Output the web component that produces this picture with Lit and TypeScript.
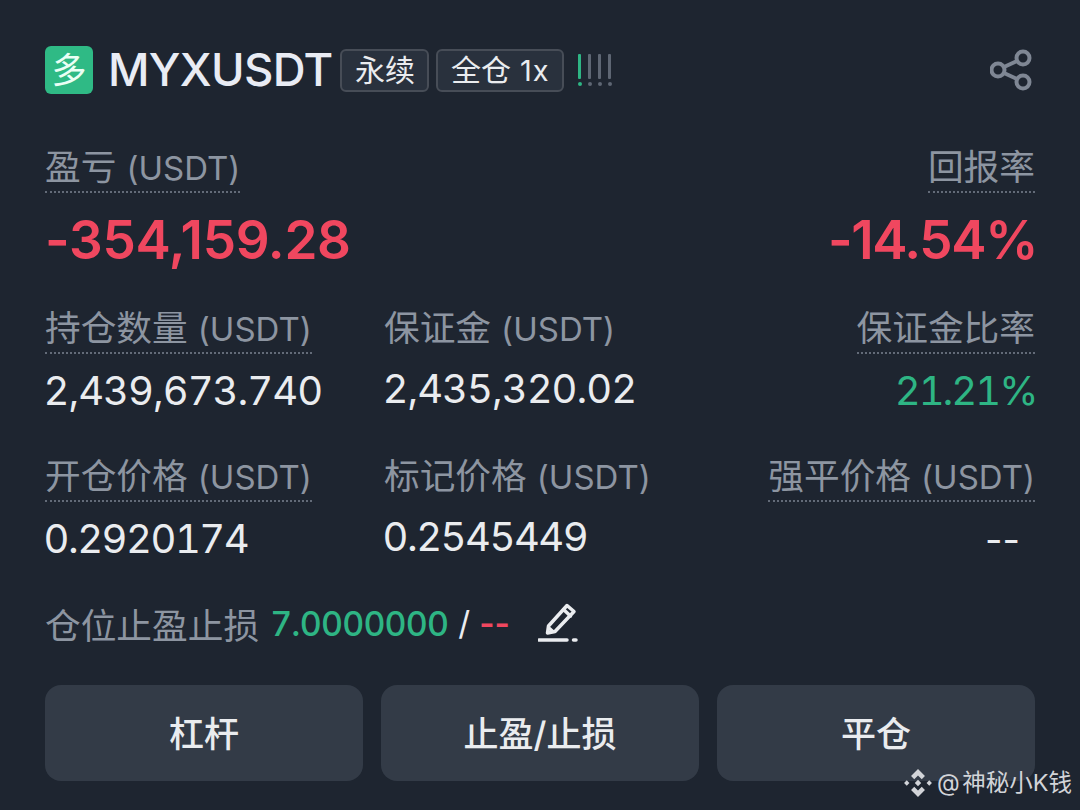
import { LitElement, html, css } from "lit";
import { customElement } from "lit/decorators.js";

@customElement("app-root")
export class AppRoot extends LitElement {
  static styles = css`
    :host {
      display: block;
      width: 1080px;
      height: 810px;
      background: #1e2530;
      position: relative;
      overflow: hidden;
      font-family: Inter, "Noto Sans CJK SC", sans-serif;
      color: #eaecef;
    }
    .page { padding: 46px 45px 0 45px; display: flex; flex-direction: column; }
    .head { display: flex; align-items: center; height: 48px; }
    .badge {
      width: 48px; height: 48px; border-radius: 6px; background: #2fba85;
      color: #eafff5; font-size: 35px; line-height: 48px; text-align: center; flex: none;
    }
    .sym { font-size: 45.500px; font-weight: 500; margin-left: 15px; letter-spacing: -0.700px; color: #e9ecf4; line-height: 48px; }
    .tag {
      height: 43px; box-sizing: border-box; border: 2px solid #474d57; border-radius: 6px;
      background: #29313d; font-size: 30px; line-height: 39px; padding: 0 12.500px; margin-left: 8px; color: #eaecef; white-space: nowrap;
    }
    .tag + .tag { margin-left: 7px; }
    .tag small { font-size: 29px; margin-left: 9px; letter-spacing: 1px; }
    .bars { display: flex; gap: 5px; margin-left: 13px; height: 32px; }
    .bar { width: 5px; display: flex; flex-direction: column; align-items: center; gap: 3px; }
    .bar i { display: block; width: 3px; height: 25px; background: #5e6673; border-radius: 1px; }
    .bar b { display: block; width: 4px; height: 4px; background: #5e6673; border-radius: 50%; }
    .bar.on i, .bar.on b { background: #2eb584; }
    .share { margin-left: auto; margin-right: 3px; display: block; }
    .row { display: grid; grid-template-columns: 339px 1fr auto; }
    .r1 { margin-top: 49px; grid-template-columns: 1fr auto; }
    .r2 { margin-top: 34px; }
    .r3 { margin-top: 38px; }
    .cell { display: flex; flex-direction: column; align-items: flex-start; }
    .cell.end { align-items: flex-end; }
    .lab {
      font-size: 35.700px; line-height: 48px; height: 48px; color: #8d95a1; border-bottom: 2px dotted #636b78;
      white-space: nowrap;
    }
    .lab.plain { border-bottom-color: transparent; }
    .lab span { font-size: 33px; }
    .pnl { font-size: 53px; line-height: 60px; font-weight: 600; color: #f0475f; margin-top: 17px; letter-spacing: -0.300px; }
    .pnl.pct { letter-spacing: -1.400px; margin-right: -2px; }
    .val {
      font-size: 40px; line-height: 46px; margin-top: 14px; margin-left: -1.500px; color: #eaecef; white-space: nowrap;
      font-variant-numeric: tabular-nums; letter-spacing: -1px;
    }
    .val.short { letter-spacing: -1.500px; }
    .up { margin-top: 12px; }
    .green { color: #2eb584; letter-spacing: -2px; margin-right: -1.500px; }
    .dash { font-variant-numeric: normal; letter-spacing: 0; font-size: 38px; margin-right: 15px; }
    .tp { display: flex; align-items: center; margin-top: 38px; height: 46px; font-size: 35.700px; color: #8d95a1; }
    .tp .g { color: #2eb584; margin-left: 11px; font-weight: 500; font-size: 34px; font-variant-numeric: tabular-nums; letter-spacing: -0.800px; }
    .tp .s { color: #eaecef; margin-left: 10px; font-size: 33px; }
    .tp .r { color: #f0475f; margin-left: 9px; font-weight: 600; font-size: 33px; }
    .tp svg { margin-left: 28px; display: block; }
    .btns { display: grid; grid-template-columns: repeat(3, 318px); gap: 18px; margin-top: 39px; }
    .btn {
      height: 96px; box-sizing: border-box; padding-bottom: 4px; border-radius: 16px; background: #333b47; color: #eaecef;
      font-size: 35px; font-weight: 500; display: flex; align-items: center; justify-content: center;
    }
    .wm {
      position: absolute; left: 903px; top: 768px; display: flex; align-items: center; gap: 4px;
      color: #d2d4d8; font-size: 23.500px; line-height: 30px; white-space: nowrap; word-spacing: -4px;
    }
  `;

  render() {
    return html`
      <div class="page">
        <div class="head">
          <div class="badge">多</div>
          <div class="sym">MYXUSDT</div>
          <div class="tag">永续</div>
          <div class="tag">全仓<small>1x</small></div>
          <div class="bars">
            <div class="bar on"><i></i><b></b></div>
            <div class="bar"><i></i><b></b></div>
            <div class="bar"><i></i><b></b></div>
            <div class="bar"><i></i><b></b></div>
          </div>
          <svg class="share" width="42" height="42" viewBox="0 0 42 42" fill="none" stroke="#7f8794" stroke-width="4">
            <circle cx="33" cy="9" r="6.500"/><circle cx="8" cy="21" r="6.500"/><circle cx="33" cy="33" r="6.500"/>
            <path d="M14 18 L27 12 M14 24 L27 30"/>
          </svg>
        </div>

        <div class="row r1">
          <div class="cell">
            <div class="lab">盈亏 <span>(USDT)</span></div>
            <div class="pnl">-354,159.28</div>
          </div>
          <div class="cell end">
            <div class="lab">回报率</div>
            <div class="pnl pct">-14.54%</div>
          </div>
        </div>

        <div class="row r2">
          <div class="cell">
            <div class="lab">持仓数量 <span>(USDT)</span></div>
            <div class="val">2,439,673.740</div>
          </div>
          <div class="cell">
            <div class="lab plain">保证金 <span>(USDT)</span></div>
            <div class="val up">2,435,320.02</div>
          </div>
          <div class="cell end">
            <div class="lab">保证金比率</div>
            <div class="val green">21.21%</div>
          </div>
        </div>

        <div class="row r3">
          <div class="cell">
            <div class="lab">开仓价格 <span>(USDT)</span></div>
            <div class="val short">0.2920174</div>
          </div>
          <div class="cell">
            <div class="lab plain">标记价格 <span>(USDT)</span></div>
            <div class="val short up">0.2545449</div>
          </div>
          <div class="cell end">
            <div class="lab">强平价格 <span>(USDT)</span></div>
            <div class="val dash">--</div>
          </div>
        </div>

        <div class="tp">
          仓位止盈止损<span class="g">7.0000000</span><span class="s">/</span><span class="r">--</span>
          <svg width="42" height="42" viewBox="0 0 42 42" fill="none" stroke="#eaecef" stroke-width="3.500" stroke-linejoin="round" stroke-linecap="round">
            <path d="M10.500 24 L29 3.500 L36 9.500 L17 29.500 L9.500 31 Z"/>
            <path d="M25.500 7.500 L32.500 14"/>
            <path d="M11 26 L15 29.500" stroke-width="3"/>
            <path d="M1 38 H29"/>
            <path d="M35.500 38 H38"/>
          </svg>
        </div>

        <div class="btns">
          <div class="btn">杠杆</div>
          <div class="btn">止盈/止损</div>
          <div class="btn">平仓</div>
        </div>
      </div>

      <div class="wm">
        <svg width="30" height="30" viewBox="0 0 28 28" fill="#d2d4d8">
          <path d="M14 1 L20.500 7.500 L17.500 10.500 L14 7 L10.500 10.500 L7.500 7.500 Z"/>
          <path d="M14 27 L20.500 20.500 L17.500 17.500 L14 21 L10.500 17.500 L7.500 20.500 Z"/>
          <path d="M14 11 L17 14 L14 17 L11 14 Z"/>
          <path d="M3.500 11.500 L6 14 L3.500 16.500 L1 14 Z"/>
          <path d="M24.500 11.500 L27 14 L24.500 16.500 L22 14 Z"/>
        </svg>
        <span>@ 神秘小K钱</span>
      </div>
    `;
  }
}
